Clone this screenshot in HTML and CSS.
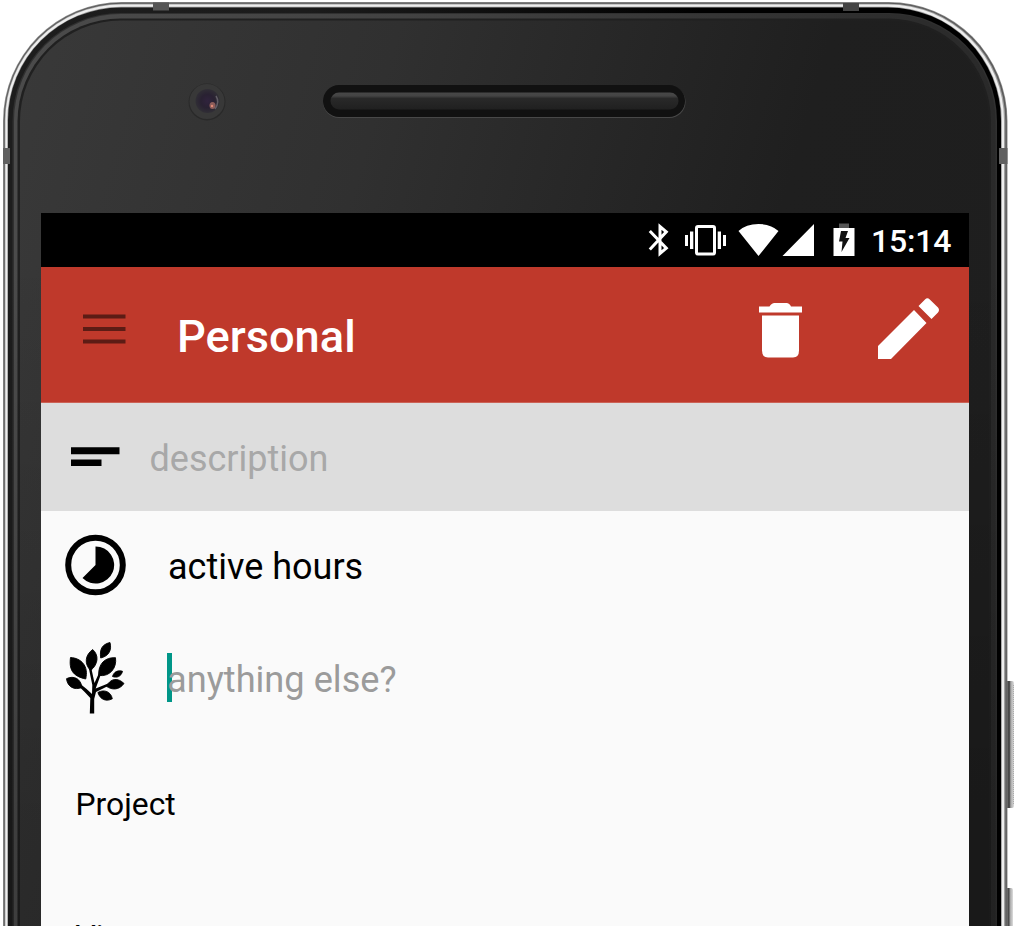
FILE: index.html
```html
<!DOCTYPE html>
<html lang="en">
<head>
<meta charset="utf-8">
<title>Personal</title>
<link rel="stylesheet" href="styles.css">
</head>
<body>
<main class="device">
  <svg class="frame" viewBox="0 0 1016 926" aria-hidden="true">
    <defs>
      <linearGradient id="body" x1="0" y1="0" x2="1" y2="0.35">
        <stop offset="0" stop-color="#393939"/><stop offset=".35" stop-color="#303030"/><stop offset=".75" stop-color="#1f1f1f"/><stop offset="1" stop-color="#1e1e1e"/>
      </linearGradient>
      <linearGradient id="fade" x1="0" y1="0" x2="0" y2="1">
        <stop offset=".2" stop-color="#000" stop-opacity="0"/><stop offset=".7" stop-color="#000" stop-opacity=".18"/>
      </linearGradient>
      <linearGradient id="rim" x1="0" y1="0" x2="1" y2="0">
        <stop offset="0" stop-color="#4b4b4b"/><stop offset=".4" stop-color="#424242"/><stop offset="1" stop-color="#292929"/>
      </linearGradient>
      <linearGradient id="bevel" x1="0" y1="0" x2="1" y2="0">
        <stop offset="0" stop-color="#1d1d1d"/><stop offset=".3" stop-color="#1b1b1b"/><stop offset=".7" stop-color="#000"/>
      </linearGradient>
      <linearGradient id="slot" x1="0" y1="0" x2="0" y2="1">
        <stop offset="0" stop-color="#484848"/><stop offset=".2" stop-color="#444"/><stop offset=".35" stop-color="#292929"/><stop offset="1" stop-color="#202020"/>
      </linearGradient>
      <linearGradient id="key" x1="0" y1="0" x2="1" y2="0">
        <stop offset="0" stop-color="#333"/><stop offset=".5" stop-color="#505050"/><stop offset=".65" stop-color="#aaa"/><stop offset="1" stop-color="#ddd"/>
      </linearGradient>
      <radialGradient id="lens"><stop offset="0" stop-color="#30233d"/><stop offset=".55" stop-color="#292132"/><stop offset="1" stop-color="#302e35"/></radialGradient>
    </defs>
    <rect x="1005" y="681" width="9" height="127" rx="2" fill="url(#key)"/>
    <path d="M1013.5 685v119" stroke="#aaa" stroke-dasharray="1 1"/>
    <rect x="1005" y="888" width="8" height="60" rx="2" fill="url(#key)"/>
    <rect x="3" y="2" width="1004.500" height="1200" rx="119" fill="#8a8a8a"/>
    <rect x="3.800" y="2.800" width="1003" height="1200" rx="118" fill="#5a5a5a"/>
    <rect x="4.700" y="3.700" width="1000.600" height="1200" rx="117" fill="#a0a0a0"/>
    <rect x="5.400" y="4.500" width="998.600" height="1200" rx="116" fill="#eee"/>
    <rect x="7.300" y="6.800" width="994.500" height="1200" rx="114" fill="#999"/>
    <rect x="8" y="7.500" width="993" height="1200" rx="113" fill="url(#bevel)"/>
    <rect x="12.500" y="13" width="984.500" height="1200" rx="108" fill="#303030"/>
    <rect x="14" y="14" width="981.500" height="1200" rx="107" fill="url(#rim)"/>
    <rect x="17.500" y="18.500" width="973.500" height="1200" rx="103" fill="#202020"/>
    <rect x="20" y="20.500" width="969" height="1200" rx="101" fill="url(#body)"/>
    <rect x="8" y="7.500" width="993" height="1200" rx="113" fill="url(#fade)"/>
    <path d="M153 2.500h16v8h-16z" fill="#555"/><path d="M843 3h16v8h-16z" fill="#444"/>
    <path d="M3 148h7v16H3zM999 148h8.500v16H999z" fill="#606060"/>
    <rect x="323" y="86" width="362.500" height="32" rx="16" fill="#484848"/>
    <rect x="323" y="85" width="362" height="32" rx="16" fill="#111"/>
    <rect x="330.500" y="92.500" width="348" height="17" rx="8.500" fill="url(#slot)"/>
    <circle cx="207" cy="102" r="18.500" fill="#292929"/>
    <circle cx="207" cy="101.500" r="17.500" fill="#383838"/>
    <circle cx="207.500" cy="101" r="12" fill="url(#lens)"/>
    <ellipse cx="212.500" cy="105.500" rx="3" ry="3.500" fill="#8c5c5a"/>
    <circle cx="212" cy="106" r="1.200" fill="#e28b76"/>
    <path d="M216 96q4 6-1 13" fill="none" stroke="#625e66" stroke-width="1.500"/>
  </svg>
  <section class="screen">
    <header class="status">
      <svg class="status-icons" width="212" height="54" viewBox="645 213 212 54" fill="#fff" aria-hidden="true">
        <path d="M649.800 231L666.300 248.200 660 253.500V226.500L666.300 231.800 649.800 249.500" fill="none" stroke="#fff" stroke-width="3"/>
        <rect x="696.500" y="226.500" width="18" height="27.500" rx="1.500" fill="none" stroke="#fff" stroke-width="3"/>
        <path d="M685 235h3v11h-3zM690 231.500h3.300v17.500H690zM717.700 231.500h3.300v17.500h-3.300zM723 235h3v11h-3z"/>
        <path d="M738.500 231Q746 224 758.500 224T778.500 231L758.500 256zM814 224v32h-31.500z"/>
        <path d="M839 223.500h10v5h-10z" fill="#555"/>
        <path d="M833.500 228h21v28h-21z"/>
        <path d="M841 231h7l-2.500 7h4l-8 14 1-10.500h-3.500z" fill="#111"/>
      </svg>
      <time class="clock">15:14</time>
    </header>
    <nav class="toolbar">
      <svg class="menu" width="43" height="30" viewBox="0 0 43 30" fill="#5c1c15" aria-hidden="true"><path d="M0 .5h42.500v4H0zM0 13h42.500v4H0zM0 25.500h42.500v4H0z"/></svg>
      <h1 class="title">Personal</h1>
      <svg class="trash" width="44" height="56" viewBox="0 0 44 56" fill="#fff" aria-hidden="true"><path d="M0 4.500H10.500Q12.500 1 15.500 1H27.500Q30.500 1 32 4.500H43V10.500H0zM3 13.500H40V48.500Q40 55.500 34 55.500H9Q3 55.500 3 48.500z"/></svg>
      <svg class="pencil" width="62" height="62" viewBox="0 0 62 62" fill="#fff" aria-hidden="true"><path d="M0 61V48L36 12 48.500 25 13 61zM40.500 8L47 1.500Q49.300-1 51.800 1.500L60 9.500Q62 12 60 14.500L53.500 21z"/></svg>
    </nav>
    <div class="row description">
      <svg class="lines" width="49" height="20" viewBox="0 0 49 20" aria-hidden="true"><path d="M0 .3h48.500v7H0zM0 12.500h30.500v6.500H0z"/></svg>
      <span class="hint">description</span>
    </div>
    <div class="row hours">
      <svg class="lead" width="62" height="62" viewBox="-30.500 -31 62 62" aria-hidden="true"><circle r="27.300" fill="none" stroke="#000" stroke-width="6"/><path d="M0 0V-18.500A18.500 18.500 0 1 1-13 13z"/></svg>
      <span class="label">active hours</span>
    </div>
    <div class="row more">
      <svg class="lead tree" width="62" height="74" viewBox="65 641 62 74" aria-hidden="true">
        <path d="M89.800 713.500L90.300 698Q85 692 79 686.500L81 684.500Q87 689 92 694L92.300 685 89 669 91.500 669 94.500 683 99 673 101 674 95.700 688.500 108 683.500 109 685.500 96 692 94.200 699V713.500z"/>
        <path stroke="#000" stroke-width=".9" stroke-linejoin="round" d="M70.500 657.500C81 658 89 666 85.700 679C72 676 69 669 70.500 657.500zM92.700 649.500C99 655 98.500 664 90.700 670.500C84 664 85 655 92.700 649.500zM110 642.500C112 650 109 656 100.700 658C99.500 649 102 644.500 110 642.500zM115.500 657.700C117 668 110 677 98.700 675.500C98 664 105 657 115.500 657.700zM122.500 671.300C121 677 116.500 678 112.500 676.500C114 671.500 118 670 122.500 671.300zM66.500 678.700C74 675 81 679 82 687.500C74.500 690.500 67.500 687 66.500 678.700zM124 683.500C119 690.500 111.500 690 106.500 686.300C110.500 678 118 677.500 124 683.500zM97.900 692.500C104 689 111 691.500 112.300 698.800C106 702 100 699.500 97.900 692.500z"/>
      </svg>
      <i class="caret"></i><span class="hint">anything else?</span>
    </div>
    <h2 class="section project">Project</h2>
    <h2 class="section view">View</h2>
  </section>
</main>
</body>
</html>
```
FILE: styles.css
```css
* { box-sizing: border-box; }
body { margin: 0; background: #fff; overflow: hidden; font-family: Roboto, sans-serif; }
.device { position: relative; width: 1016px; height: 926px; padding: 213px 46.5px 0 41px; overflow: hidden; }
.frame { position: absolute; left: 0; top: 0; width: 1016px; height: 926px; }
.screen { position: relative; width: 928.4px; height: 713px; background: #fafafa; color: #000; overflow: hidden; display: flex; flex-direction: column; }
.screen > * { flex-shrink: 0; }
.status { height: 54px; background: #000; display: flex; justify-content: flex-start; align-items: center; padding-left: 604px; }
.clock { width: 84px; margin-left: 14px; font-size: 32px; font-weight: 500; line-height: 54px; color: #fff; white-space: nowrap; padding-top: 2px; letter-spacing: -.2px; }
.toolbar { height: 136px; background: #bf392b; border-bottom: 1px solid #cb6256; display: flex; align-items: flex-start; padding-left: 42px; }
.menu { margin-top: 47px; }
.title { margin: 0 0 0 51px; width: 582px; padding-top: 42px; line-height: 56px; font-size: 45.2px; font-weight: 500; color: #fff; }
.trash { margin-top: 35px; }
.pencil { margin: 31px 0 0 75px; }
.row { display: flex; align-items: center; font-size: 36px; line-height: 42px; white-space: nowrap; }
.description { height: 108px; background: #ddd; padding-left: 30px; }
.lines { margin-top: -1px; }
.description .hint { margin-left: 29.5px; color: #a8a8a8; padding-top: 3px; }
.hours { height: 108px; padding-left: 24px; }
.label { margin-left: 41px; padding-top: 4px; }
.more { height: 118px; padding-left: 24px; }
.caret { width: 5px; height: 49px; margin: -2px 0 0 40px; background: #009688; }
.more .hint { margin-left: -5px; color: #9b9b9b; padding-top: 4px; font-size: 36.2px; }
.section { margin: 0; padding-left: 34.5px; font-size: 31.8px; line-height: 40px; font-weight: 400; }
.project { margin-top: 47px; }
.view { margin-top: 92px; }
```
